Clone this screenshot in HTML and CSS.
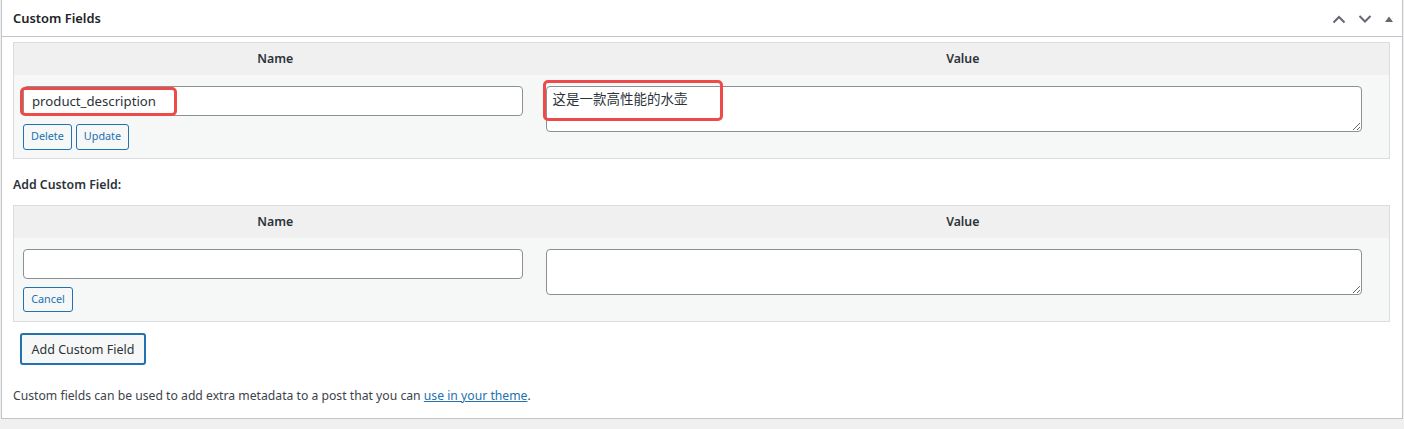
FILE: index.html
```html
<!DOCTYPE html>
<html lang="en">
<head>
<meta charset="utf-8">
<title>Custom Fields</title>
<link rel="stylesheet" href="styles.css">
</head>
<body>
<div class="postbox">
  <div class="postbox-header">
    <h2 class="hndle">Custom Fields</h2>
    <div class="handle-actions">
      <button class="handle-btn" aria-label="Move up">
        <svg width="14" height="10" viewBox="0 0 14 10"><path d="M1.5 8.5 L7 3 L12.5 8.5" fill="none" stroke="#646970" stroke-width="2"/></svg>
      </button>
      <button class="handle-btn" aria-label="Move down">
        <svg width="14" height="10" viewBox="0 0 14 10"><path d="M1.5 2 L7 7.5 L12.5 2" fill="none" stroke="#646970" stroke-width="2"/></svg>
      </button>
      <button class="handle-btn small" aria-label="Toggle panel">
        <svg width="10" height="8" viewBox="0 0 10 8"><path d="M1 7 L5 1.5 L9 7 Z" fill="#646970"/></svg>
      </button>
    </div>
  </div>
  <div class="inside">
    <table class="meta-table">
      <thead>
        <tr><th class="col-name">Name</th><th class="col-value">Value</th></tr>
      </thead>
      <tbody>
        <tr>
          <td class="cell-name">
            <div class="annot-wrap">
              <input class="text-input" type="text" value="product_description">
              <span class="annot annot-name"></span>
            </div>
            <div class="btn-row">
              <button class="btn-small">Delete</button>
              <button class="btn-small">Update</button>
            </div>
          </td>
          <td class="cell-value">
            <div class="annot-wrap">
              <textarea class="text-area">这是一款高性能的水壶</textarea>
              <span class="annot annot-value"></span>
            </div>
          </td>
        </tr>
      </tbody>
    </table>

    <p class="add-label">Add Custom Field:</p>

    <table class="meta-table">
      <thead>
        <tr><th class="col-name">Name</th><th class="col-value">Value</th></tr>
      </thead>
      <tbody>
        <tr>
          <td class="cell-name">
            <input class="text-input" type="text" value="">
            <div class="btn-row">
              <button class="btn-small cancel">Cancel</button>
            </div>
          </td>
          <td class="cell-value">
            <textarea class="text-area"></textarea>
          </td>
        </tr>
      </tbody>
    </table>

    <div class="submit-row">
      <button class="btn-add">Add Custom Field</button>
    </div>

    <p class="help">Custom fields can be used to add extra metadata to a post that you can <a href="#">use in your theme</a>.</p>
  </div>
</div>
</body>
</html>
```

FILE: styles.css
```css
* { box-sizing: border-box; }

html, body {
  margin: 0;
  padding: 0;
  background: #f0f0f1;
  font-family: "Noto Sans", "Open Sans", "Noto Sans CJK SC", sans-serif;
  font-size: 12.3px;
  color: #3c434a;
}

.postbox {
  margin: 0 1px;
  width: 1402px;
  height: 419px;
  background: #fff;
  border: 1px solid #c3c4c7;
  border-top: none;
}

.postbox-header {
  height: 37px;
  border-bottom: 1px solid #c3c4c7;
  display: flex;
  align-items: center;
  justify-content: space-between;
  padding: 0 8px 0 11px;
}

.hndle {
  margin: 0;
  font-size: 12.9px;
  font-weight: 600;
  color: #1d2327;
  line-height: 1;
  padding-top: 1px;
}

.handle-actions {
  display: flex;
  align-items: center;
  gap: 12px;
  padding-top: 1px;
}

.handle-btn {
  border: none;
  background: none;
  padding: 0;
  width: 14px;
  height: 12px;
  display: flex;
  align-items: center;
  justify-content: center;
}

.handle-btn.small {
  width: 10px;
}

.inside {
  padding: 5px 12px 0 11px;
}

.meta-table {
  width: 1377px;
  border: 1px solid #dcdcde;
  border-collapse: collapse;
  border-spacing: 0;
  background: #f6f7f7;
}

.meta-table th {
  background: #f0f0f1;
  height: 32px;
  font-size: 12.3px;
  font-weight: 600;
  color: #2c3338;
  text-align: center;
  padding: 0;
}

.col-name { width: 523px; }

.meta-table td {
  vertical-align: top;
  padding: 11px 0 0 9px;
}

.cell-name {
  height: 84px;
}

.annot-wrap {
  position: relative;
}

.text-input {
  display: block;
  width: 500px;
  height: 30px;
  margin: 0;
  border: 1px solid #8c8f94;
  border-radius: 4px;
  background: #fff;
  padding: 0 8px;
  font-family: inherit;
  font-size: 13.2px;
  color: #2c3338;
}

.btn-row {
  display: flex;
  gap: 4px;
  margin-top: 8px;
}

.btn-small {
  height: 26px;
  padding: 0 7px;
  border: 1px solid #2271b1;
  border-radius: 3px;
  background: #f6f7f7;
  color: #2271b1;
  font-family: inherit;
  font-size: 10.8px;
  line-height: 1;
}

.btn-small.cancel {
  height: 25px;
  width: 50px;
}

.text-area {
  display: block;
  width: 816px;
  height: 46px;
  margin: 0;
  border: 1px solid #8c8f94;
  border-radius: 4px;
  background: #fff;
  padding: 3px 6px;
  font-family: "Noto Sans", "Noto Sans CJK SC", sans-serif;
  font-size: 13.5px;
  line-height: 1.4;
  color: #2c3338;
  resize: both;
}

.annot {
  position: absolute;
  border: 3px solid #ef4a4a;
  border-radius: 5px;
  pointer-events: none;
}

.annot-name {
  left: -3px;
  top: 1px;
  width: 157px;
  height: 29px;
}

.annot-value {
  left: -3px;
  top: -6px;
  width: 180px;
  height: 41px;
}

.add-label {
  margin: 0;
  height: 46px;
  display: flex;
  align-items: center;
  font-weight: 600;
  color: #2c3338;
  padding-top: 4px;
}

.submit-row {
  padding: 11px 0 0 7px;
}

.btn-add {
  width: 126px;
  height: 32px;
  border: 2px solid #2271b1;
  border-radius: 3px;
  background: #f6f7f7;
  color: #2c3338;
  font-family: inherit;
  font-size: 12.5px;
  padding: 0;
}

.help {
  margin: 22px 0 0;
  color: #3c434a;
  font-size: 12.2px;
}

.help a {
  color: #2271b1;
  text-decoration: underline;
}
```
